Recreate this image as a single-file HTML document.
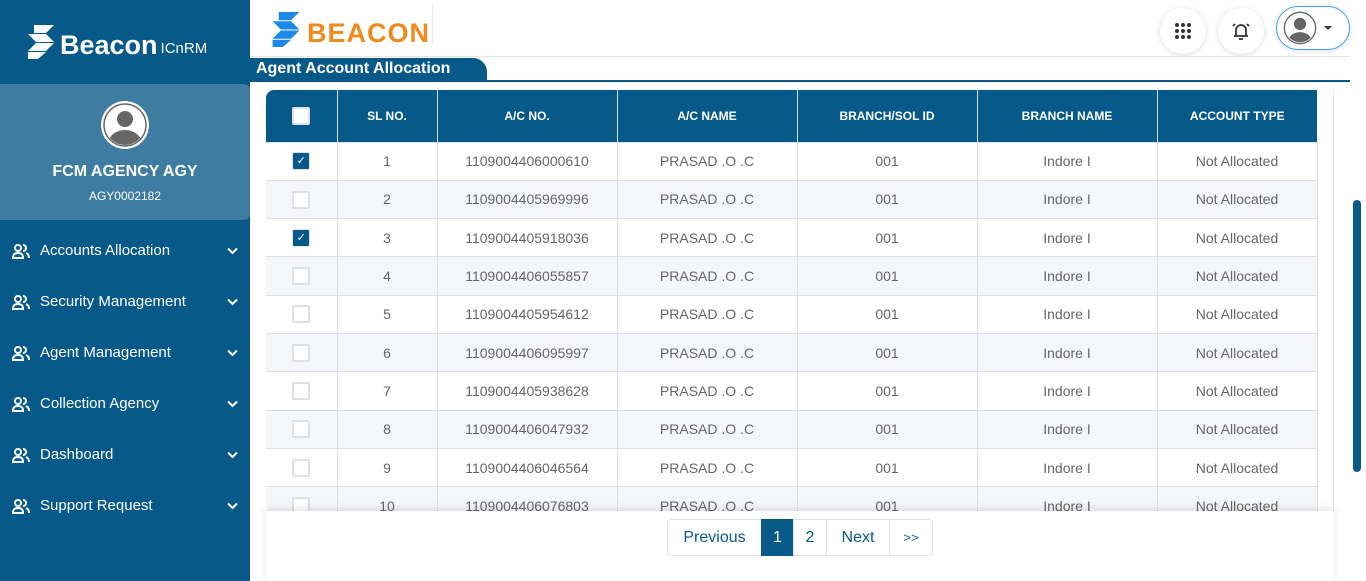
<!DOCTYPE html>
<html><head><meta charset="utf-8"><style>
*{box-sizing:border-box;margin:0;padding:0}
body{width:1366px;height:581px;overflow:hidden;font-family:"Liberation Sans",sans-serif;background:#fff;position:relative}
.sb{position:absolute;left:0;top:0;width:250px;height:581px;background:#07598a;color:#fff}
.card{position:absolute;left:0;top:84px;width:250px;height:136px;background:#3f7ca1;border-radius:0 6px 6px 0;text-align:center}
.nav{position:absolute;left:12px;font-size:15px;display:flex;align-items:center;width:226px}
.nav span{margin-left:10px;flex:1}
table{position:absolute;left:266px;top:90px;border-collapse:collapse;font-size:14px;color:#666}
th{background:#07598a;color:#fff;font-size:12px;height:52px;font-weight:bold;border-right:1px solid #d9dde3}
td{height:38.3px;text-align:center;border:1px solid #dde1e6;border-left:none}
tr:nth-child(odd) td{background:#f5f6f9}
.cb{display:inline-block;width:18px;height:18px;border:2px solid #dde1e4;border-radius:2px;background:#fff;vertical-align:middle}
.ck{background:#07598a;border:1px solid #dde1e4;color:#fff;font-size:11px;line-height:16px}
.pg{position:absolute;left:266px;top:511px;width:1068px;height:70px;background:#fff;box-shadow:0 -2px 8px rgba(0,0,0,.12)}
.pb{position:absolute;top:8px;height:37px;border:1px solid #dee2e6;color:#07598a;font-size:16px;display:flex;align-items:center;justify-content:center}
.ib{position:absolute;top:8px;width:46px;height:46px;border-radius:50%;background:#fff;box-shadow:0 1px 6px rgba(0,0,0,.15);display:flex;align-items:center;justify-content:center}
</style></head><body>
<div class="sb">
 <div style="position:absolute;left:28px;top:25px;display:flex;align-items:flex-end">
  <svg width="28" height="34" viewBox="0 0 28 34"><path d="M6 0h20L18 8H6zM0 9h18l8 8H8zM8 18h18l-8 8H0zM0 27h18l-8 7H0z" fill="#fff"/></svg>
  <span style="font-size:27px;font-weight:bold;margin-left:4px;line-height:28px">Beacon</span><span style="font-size:15px;margin-left:3px;margin-bottom:2px">ICnRM</span>
 </div>
 <div class="card">
  <svg style="margin-top:16px" width="50" height="50" viewBox="0 0 50 50"><circle cx="25" cy="25" r="24" fill="#fff"/><circle cx="25" cy="25" r="21" fill="#fff" stroke="#666" stroke-width="1.5"/><clipPath id="c"><circle cx="25" cy="25" r="20"/></clipPath><g clip-path="url(#c)" fill="#666"><circle cx="25" cy="19" r="8"/><ellipse cx="25" cy="44" rx="17" ry="14"/></g></svg>
  <div style="font-weight:bold;font-size:16px;margin-top:8px">FCM AGENCY AGY</div>
  <div style="font-size:12px;margin-top:8px">AGY0002182</div>
 </div>
 <div class="nav" style="top:242px"><svg width="18" height="16" viewBox="0 0 18 16" fill="none" stroke="#fff" stroke-width="2"><circle cx="6" cy="5" r="3"/><path d="M1 15c0-4 2-5 5-5s5 1 5 5zM11 2a3 3 0 0 1 0 6M14 10c2 1 3 2 3 5"/></svg><span>Accounts Allocation</span><svg width="11" height="8" viewBox="0 0 11 8"><path d="M1 1.5l4.5 4.5 4.5-4.5" fill="none" stroke="#fff" stroke-width="2"/></svg></div>
 <div class="nav" style="top:293px"><svg width="18" height="16" viewBox="0 0 18 16" fill="none" stroke="#fff" stroke-width="2"><circle cx="6" cy="5" r="3"/><path d="M1 15c0-4 2-5 5-5s5 1 5 5zM11 2a3 3 0 0 1 0 6M14 10c2 1 3 2 3 5"/></svg><span>Security Management</span><svg width="11" height="8" viewBox="0 0 11 8"><path d="M1 1.5l4.5 4.5 4.5-4.5" fill="none" stroke="#fff" stroke-width="2"/></svg></div>
 <div class="nav" style="top:344px"><svg width="18" height="16" viewBox="0 0 18 16" fill="none" stroke="#fff" stroke-width="2"><circle cx="6" cy="5" r="3"/><path d="M1 15c0-4 2-5 5-5s5 1 5 5zM11 2a3 3 0 0 1 0 6M14 10c2 1 3 2 3 5"/></svg><span>Agent Management</span><svg width="11" height="8" viewBox="0 0 11 8"><path d="M1 1.5l4.5 4.5 4.5-4.5" fill="none" stroke="#fff" stroke-width="2"/></svg></div>
 <div class="nav" style="top:395px"><svg width="18" height="16" viewBox="0 0 18 16" fill="none" stroke="#fff" stroke-width="2"><circle cx="6" cy="5" r="3"/><path d="M1 15c0-4 2-5 5-5s5 1 5 5zM11 2a3 3 0 0 1 0 6M14 10c2 1 3 2 3 5"/></svg><span>Collection Agency</span><svg width="11" height="8" viewBox="0 0 11 8"><path d="M1 1.5l4.5 4.5 4.5-4.5" fill="none" stroke="#fff" stroke-width="2"/></svg></div>
 <div class="nav" style="top:446px"><svg width="18" height="16" viewBox="0 0 18 16" fill="none" stroke="#fff" stroke-width="2"><circle cx="6" cy="5" r="3"/><path d="M1 15c0-4 2-5 5-5s5 1 5 5zM11 2a3 3 0 0 1 0 6M14 10c2 1 3 2 3 5"/></svg><span>Dashboard</span><svg width="11" height="8" viewBox="0 0 11 8"><path d="M1 1.5l4.5 4.5 4.5-4.5" fill="none" stroke="#fff" stroke-width="2"/></svg></div>
 <div class="nav" style="top:497px"><svg width="18" height="16" viewBox="0 0 18 16" fill="none" stroke="#fff" stroke-width="2"><circle cx="6" cy="5" r="3"/><path d="M1 15c0-4 2-5 5-5s5 1 5 5zM11 2a3 3 0 0 1 0 6M14 10c2 1 3 2 3 5"/></svg><span>Support Request</span><svg width="11" height="8" viewBox="0 0 11 8"><path d="M1 1.5l4.5 4.5 4.5-4.5" fill="none" stroke="#fff" stroke-width="2"/></svg></div>
</div>
<div style="position:absolute;left:272px;top:10px;display:flex;align-items:center">
 <svg width="30" height="35" viewBox="0 0 28 34"><path d="M6 0h20L18 8H6zM0 9h18l8 8H8zM8 18h18l-8 8H0zM0 27h18l-8 7H0z" fill="#1a8ae6"/></svg>
 <span style="font-size:27px;font-weight:bold;color:#f08a1c;margin-left:5px;letter-spacing:1px;margin-top:8px">BEACON</span>
</div>
<div style="position:absolute;left:432px;top:5px;width:1px;height:40px;background:#eee"></div>
<div class="ib" style="left:1160px"><svg width="18" height="18" viewBox="0 0 18 18" fill="#333"><circle cx="3" cy="3" r="2"/><circle cx="9" cy="3" r="2"/><circle cx="15" cy="3" r="2"/><circle cx="3" cy="9" r="2"/><circle cx="9" cy="9" r="2"/><circle cx="15" cy="9" r="2"/><circle cx="3" cy="15" r="2"/><circle cx="9" cy="15" r="2"/><circle cx="15" cy="15" r="2"/></svg></div>
<div class="ib" style="left:1218px"><svg width="22" height="22" viewBox="0 0 22 22" fill="none" stroke="#333" stroke-width="1.8"><path d="M6 16V10a5 5 0 0 1 10 0v6M4 16h14M9 19h4M3 6l2-2M19 6l-2-2"/></svg></div>
<div style="position:absolute;left:1276px;top:6px;width:74px;height:44px;border:1px solid #3aa0f0;border-radius:22px;background:#fff;box-shadow:0 1px 6px rgba(0,0,0,.12)">
 <svg style="position:absolute;left:6px;top:4px" width="34" height="34" viewBox="0 0 50 50"><circle cx="25" cy="25" r="23" fill="#fff" stroke="#666" stroke-width="2"/><clipPath id="d"><circle cx="25" cy="25" r="21"/></clipPath><g clip-path="url(#d)" fill="#666"><circle cx="25" cy="19" r="9"/><ellipse cx="25" cy="46" rx="18" ry="15"/></g></svg>
 <div style="position:absolute;left:47px;top:19px;border:4px solid transparent;border-top:4px solid #333;border-bottom:0"></div>
</div>
<div style="position:absolute;left:250px;top:56px;width:1100px;height:1px;background:#e4e4e4"></div>
<div style="position:absolute;left:250px;top:58px;width:237px;height:23px;background:#07598a;border-radius:0 14px 0 0;color:#fff;font-weight:bold;font-size:16px;padding-left:6px;line-height:22px">Agent Account Allocation</div>
<div style="position:absolute;left:250px;top:80px;width:1100px;height:2px;background:#07598a"></div>
<div style="position:absolute;left:1333px;top:90px;width:1px;height:421px;background:#e4e4e4"></div>
<div style="position:absolute;left:1353px;top:200px;width:8px;height:272px;background:#07598a;border-radius:4px"></div>
<table>
<tr><th style="width:71px;border-radius:8px 0 0 0"><span class="cb" style="border-color:#dde1e4"></span></th><th style="width:100px">SL NO.</th><th style="width:180px">A/C NO.</th><th style="width:180px">A/C NAME</th><th style="width:180px">BRANCH/SOL ID</th><th style="width:180px">BRANCH NAME</th><th style="width:160px;border-right:none">ACCOUNT TYPE</th></tr>
<tr><td><span class="cb ck">✓</span></td><td>1</td><td>1109004406000610</td><td>PRASAD .O .C</td><td>001</td><td>Indore I</td><td>Not Allocated</td></tr>
<tr><td><span class="cb"></span></td><td>2</td><td>1109004405969996</td><td>PRASAD .O .C</td><td>001</td><td>Indore I</td><td>Not Allocated</td></tr>
<tr><td><span class="cb ck">✓</span></td><td>3</td><td>1109004405918036</td><td>PRASAD .O .C</td><td>001</td><td>Indore I</td><td>Not Allocated</td></tr>
<tr><td><span class="cb"></span></td><td>4</td><td>1109004406055857</td><td>PRASAD .O .C</td><td>001</td><td>Indore I</td><td>Not Allocated</td></tr>
<tr><td><span class="cb"></span></td><td>5</td><td>1109004405954612</td><td>PRASAD .O .C</td><td>001</td><td>Indore I</td><td>Not Allocated</td></tr>
<tr><td><span class="cb"></span></td><td>6</td><td>1109004406095997</td><td>PRASAD .O .C</td><td>001</td><td>Indore I</td><td>Not Allocated</td></tr>
<tr><td><span class="cb"></span></td><td>7</td><td>1109004405938628</td><td>PRASAD .O .C</td><td>001</td><td>Indore I</td><td>Not Allocated</td></tr>
<tr><td><span class="cb"></span></td><td>8</td><td>1109004406047932</td><td>PRASAD .O .C</td><td>001</td><td>Indore I</td><td>Not Allocated</td></tr>
<tr><td><span class="cb"></span></td><td>9</td><td>1109004406046564</td><td>PRASAD .O .C</td><td>001</td><td>Indore I</td><td>Not Allocated</td></tr>
<tr><td><span class="cb"></span></td><td>10</td><td>1109004406076803</td><td>PRASAD .O .C</td><td>001</td><td>Indore I</td><td>Not Allocated</td></tr>
</table>
<div class="pg">
 <div class="pb" style="left:401px;width:95px;border-radius:5px 0 0 5px">Previous</div>
 <div class="pb" style="left:495px;width:33px;background:#07598a;color:#fff;border-color:#07598a">1</div>
 <div class="pb" style="left:527px;width:34px">2</div>
 <div class="pb" style="left:560px;width:64px">Next</div>
 <div class="pb" style="left:623px;width:44px;border-radius:0 5px 5px 0;font-size:13px">&gt;&gt;</div>
</div>
</body></html>
